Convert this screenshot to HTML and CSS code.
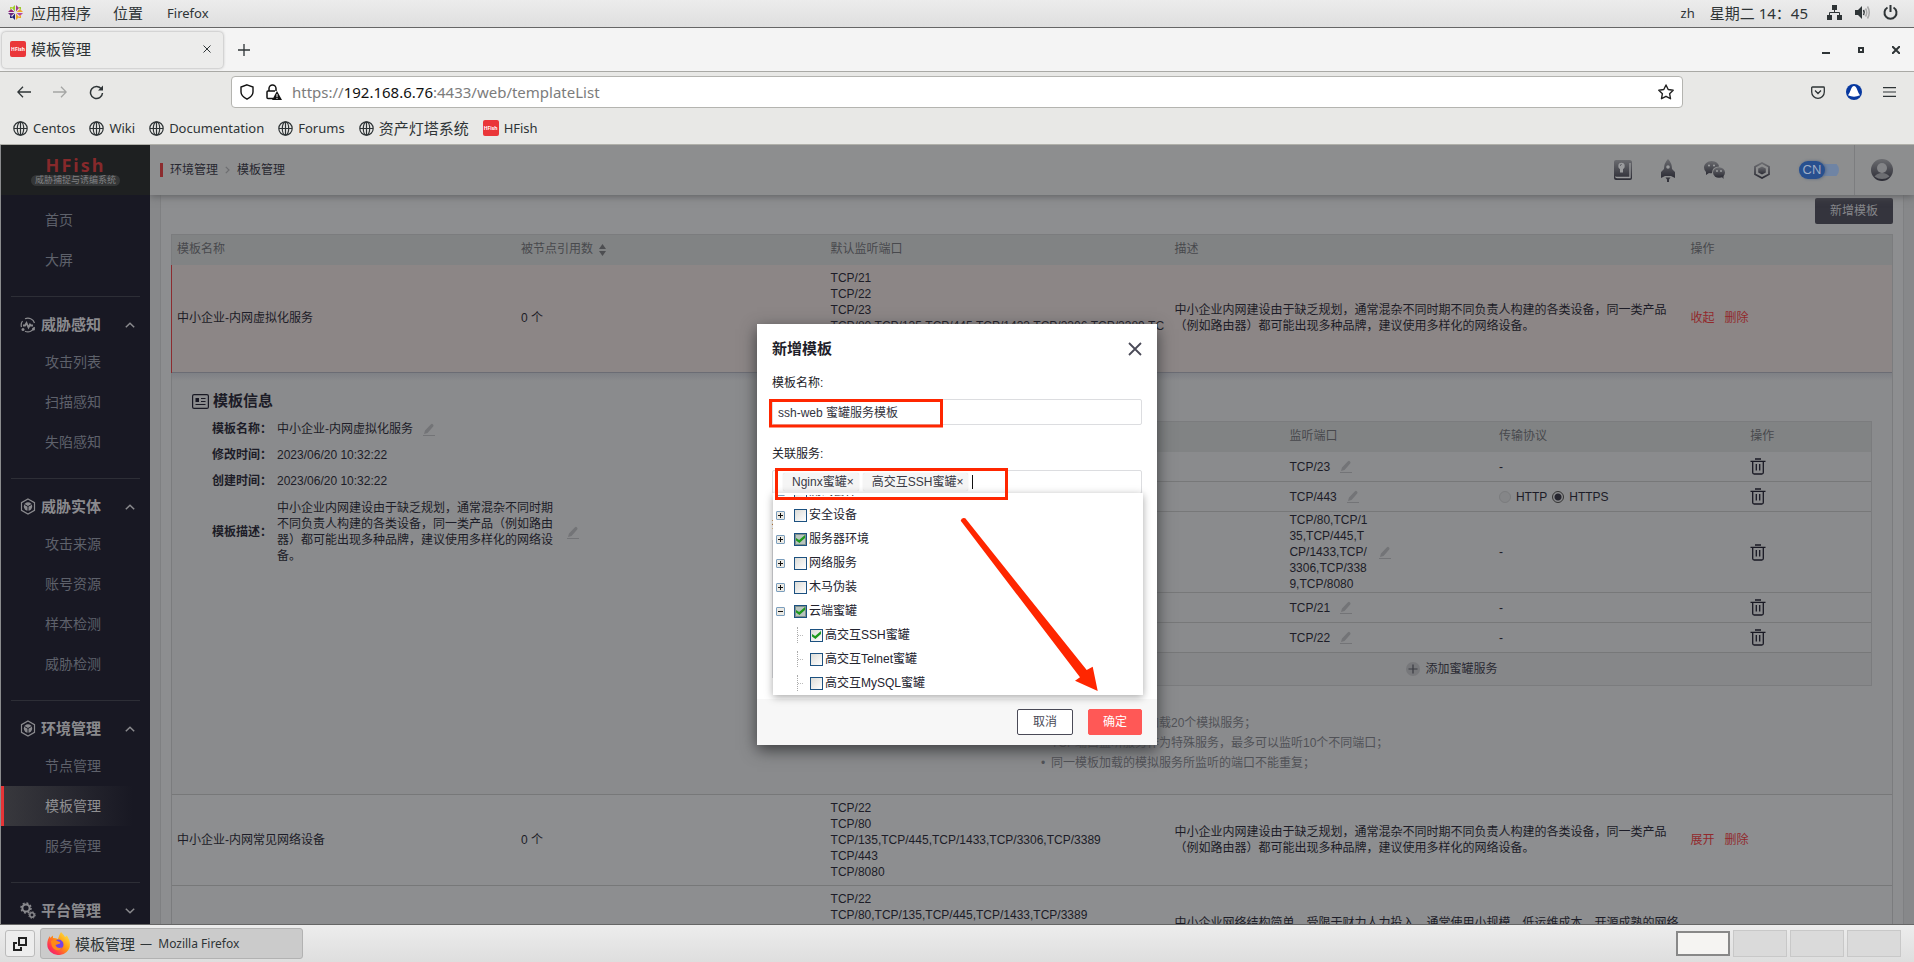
FILE: index.html
```html
<!DOCTYPE html>
<html lang="zh-CN">
<head>
<meta charset="utf-8">
<title>模板管理</title>
<link rel="stylesheet" href="styles.css">
</head>
<body>
<svg class="defs" aria-hidden="true">
  <defs>
    <linearGradient id="fade" x1="0" y1="0" x2="0" y2="1"><stop offset="0" stop-color="#6b6c70"/><stop offset="1" stop-color="#2b2b34"/></linearGradient>
    <symbol id="globe" viewBox="0 0 15 15"><g fill="none" stroke="#2e3436" stroke-width="1.2"><circle cx="7.5" cy="7.5" r="6.7"/><ellipse cx="7.5" cy="7.5" rx="3.2" ry="6.7"/><path d="M1 7.5H14M7.5 1V14"/></g></symbol>
    <symbol id="pen" viewBox="0 0 12 13"><path d="M1 11 2 7.500 8 1.200Q9 .4 10 1.400 11 2.200 10.200 3.400L4.500 10Z" fill="#737477"/><path d="M0 12.500H12" stroke="#737477"/></symbol>
    <symbol id="trash" viewBox="0 0 16 17"><g fill="none" stroke="#181823" stroke-width="1.300"><path d="M5 1H11M.5 3.300H15.500M2.700 3.500V14.500Q2.700 16 4.200 16H11.800Q13.300 16 13.300 14.500V3.500M6.300 6V12.500M9.700 6V12.500"/></g></symbol>
    <symbol id="up" viewBox="0 0 10 6"><path d="M.8 5.200 5 1.200 9.200 5.200" fill="none" stroke="#8a8a8e" stroke-width="1.500"/></symbol>
    <symbol id="hex" viewBox="0 0 16 17"><g fill="none" stroke="#8a8a8e" stroke-width="1.200"><path d="M8 1 14.500 4.700V12.300L8 16 1.500 12.300V4.700Z"/></g><circle cx="8" cy="8.500" r="4.200" fill="#8a8a8e"/><path d="M8 8.500V13M8 8.500 4.500 6.500M8 8.500 11.500 6.500" stroke="#181823" stroke-width="1"/></symbol>
  </defs>
</svg>

<header class="topbar">
  <nav class="topbar-menu">
    <svg width="15" height="15" viewBox="0 0 15 15"><path d="M7 0 4 3 7 6.500Z" fill="#9ccd2a"/><path d="M8 0 11 3 8 6.500Z" fill="#a23a8c"/><path d="M0 7 3 4 6.500 7Z" fill="#932279"/><path d="M0 8 3 11 6.500 8Z" fill="#6b2a80"/><path d="M15 7 12 4 8.500 7Z" fill="#efa724"/><path d="M15 8 12 11 8.500 8Z" fill="#b84aa0"/><path d="M7 15 4 12 7 8.500Z" fill="#262577"/><path d="M8 15 11 12 8 8.500Z" fill="#efa724"/><path d="M2 2H5L2 5Z" fill="#b5d334"/><path d="M13 2H10L13 5Z" fill="#9ccd2a"/><path d="M2 13H5L2 10Z" fill="#262577"/><path d="M13 13H10L13 10Z" fill="#efa724"/></svg>
    <button class="plain cjk">应用程序</button><button class="plain cjk place">位置</button><button class="plain app">Firefox</button>
  </nav>
  <div class="topbar-status">
    <span>zh</span><span class="cjk time">星期二 14：45</span>
    <svg width="15" height="15" viewBox="0 0 15 15"><path d="M5 0H10V5H5ZM0 10H5V15H0ZM10 10H15V15H10Z" fill="#2e3436"/><path d="M7.500 5V7.500M2.500 10V7.500H12.500V10" fill="none" stroke="#2e3436"/></svg>
    <svg width="15" height="15" viewBox="0 0 15 15"><path d="M0 5H3L7 1V14L3 10H0Z" fill="#2e3436"/><path d="M8.500 5Q10 7.500 8.500 10" fill="none" stroke="#2e3436" stroke-width="1.500"/><path d="M10.500 3.500Q13 7.500 10.500 11.500M12.500 1.500Q16 7.500 12.500 13.500" fill="none" stroke="#aaa" stroke-width="1.500"/></svg>
    <svg width="15" height="15" viewBox="0 0 15 15"><path d="M4.500 2.500A6 6 0 1 0 10.500 2.500M7.500 0V7" fill="none" stroke="#2e3436" stroke-width="2"/></svg>
  </div>
</header>

<div class="tabs">
  <div class="tab"><span class="fav">HFish</span><span class="tab-title cjk">模板管理</span>
    <button class="plain tab-close" aria-label="关闭"><svg width="8" height="8" viewBox="0 0 8 8"><path d="M.5.5 7.500 7.500M7.500.5.5 7.500" stroke="#2e3436"/></svg></button></div>
  <button class="plain" aria-label="新标签页"><svg width="12" height="12" viewBox="0 0 12 12"><path d="M6 0V12M0 6H12" stroke="#2e3436" stroke-width="1.300"/></svg></button>
  <div class="window-buttons">
    <button class="plain" aria-label="最小化"><svg width="8" height="8" viewBox="0 0 8 8"><path d="M0 7H8" stroke="#2e3436" stroke-width="2"/></svg></button>
    <button class="plain" aria-label="最大化"><svg width="6" height="6" viewBox="0 0 6 6"><path d="M1 1H5V5H1Z" fill="none" stroke="#2e3436" stroke-width="2"/></svg></button>
    <button class="plain" aria-label="关闭窗口"><svg width="8" height="8" viewBox="0 0 8 8"><path d="M0 0 8 8M8 0 0 8" stroke="#2e3436" stroke-width="2"/></svg></button>
  </div>
</div>

<div class="navbar">
  <div class="nav-buttons">
    <button class="plain" aria-label="后退"><svg width="14" height="12" viewBox="0 0 14 12"><path d="M14 6H1M6 .8.8 6 6 11.200" fill="none" stroke="#2e3436" stroke-width="1.300"/></svg></button>
    <button class="plain" aria-label="前进"><svg width="14" height="12" viewBox="0 0 14 12"><path d="M0 6H13M8 .8 13.200 6 8 11.200" fill="none" stroke="#a4a5a4" stroke-width="1.300"/></svg></button>
    <button class="plain" aria-label="刷新"><svg width="15" height="15" viewBox="0 0 15 15"><path d="M12.500 4.200A6 6 0 1 0 13.500 8" fill="none" stroke="#2e3436" stroke-width="1.500"/><path d="M14 .5V5.500H9Z" fill="#2e3436"/></svg></button>
  </div>
  <div class="urlbar">
    <svg width="14" height="16" viewBox="0 0 14 16"><path d="M7 .8 13 3V8Q13 12 7 15.200 1 12 1 8V3Z" fill="none" stroke="#111" stroke-width="1.400"/></svg>
    <svg width="16" height="16" viewBox="0 0 16 16"><path d="M3 7V4.500A3.500 3.500 0 0 1 10 4.500V7M7 14.500H2Q1 14.500 1 13.500V8Q1 7 2 7H9" fill="none" stroke="#111" stroke-width="1.500"/><path d="M11 7 16 16H6Z" fill="#111"/><path d="M11 10V13M11 13.800V15" stroke="#fff"/></svg>
    <span class="url">https://<b>192.168.6.76</b>:4433/web/templateList</span>
    <svg class="star" width="16" height="16" viewBox="0 0 16 16"><path d="M8 1 10.200 5.500 15.200 6.200 11.600 9.700 12.500 14.700 8 12.300 3.500 14.700 4.400 9.700.8 6.200 5.800 5.500Z" fill="none" stroke="#222" stroke-width="1.400" stroke-linejoin="round"/></svg>
  </div>
  <div class="nav-tools">
    <svg width="14" height="13" viewBox="0 0 14 13"><path d="M1.500 1H12.500Q13.300 1 13.300 1.800V6A6.300 6.300 0 0 1 .7 6V1.800Q.7 1 1.500 1ZM4 4.500 7 7.500 10 4.500" fill="none" stroke="#2e3436" stroke-width="1.300"/></svg>
    <svg width="16" height="16" viewBox="0 0 16 16"><circle cx="8" cy="8" r="8" fill="#0839a0"/><path d="M8 2Q10 2 11.300 6 12.300 9 14 11.300 11 12.700 8 12.700T2 11.300Q3.700 9 4.700 6 6 2 8 2Z" fill="#fff"/></svg>
    <svg width="13" height="10" viewBox="0 0 13 10"><path d="M0 .7H13M0 5H13M0 9.300H13" stroke="#2e3436" stroke-width="1.200"/></svg>
  </div>
</div>

<nav class="bookmarks">
  <a href="#"><svg width="15" height="15"><use href="#globe"/></svg>Centos</a>
  <a href="#"><svg width="15" height="15"><use href="#globe"/></svg>Wiki</a>
  <a href="#"><svg width="15" height="15"><use href="#globe"/></svg>Documentation</a>
  <a href="#"><svg width="15" height="15"><use href="#globe"/></svg>Forums</a>
  <a href="#" class="cjk"><svg width="15" height="15"><use href="#globe"/></svg>资产灯塔系统</a>
  <a href="#"><span class="fav">HFish</span>HFish</a>
</nav>

<div class="page">
  <aside class="sidebar">
    <div class="logo"><strong>HFish</strong><span>威胁捕捉与诱编系统</span></div>
    <nav class="menu">
      <a href="#">首页</a><a href="#">大屏</a>
      <section><h2><svg width="16" height="16" viewBox="0 0 16 16"><path d="M5 1.800A6.800 6.800 0 0 1 14.500 6M14.500 10A6.800 6.800 0 0 1 5 14.200M2.500 4A6.800 6.800 0 0 0 1.500 10" fill="none" stroke="#8a8a8e" stroke-width="1.200"/><path d="M3 8.500H5L6.500 6 8.500 10.500 10 7.500 11 8.500H13" fill="none" stroke="#8a8a8e" stroke-width="1.800"/><circle cx="3" cy="12.500" r="1.500" fill="#8a8a8e"/><circle cx="13.500" cy="12" r="1.500" fill="#8a8a8e"/></svg>威胁感知<svg class="arrow" width="10" height="6"><use href="#up"/></svg></h2>
        <a href="#">攻击列表</a><a href="#">扫描感知</a><a href="#">失陷感知</a></section>
      <section><h2><svg width="16" height="17"><use href="#hex"/></svg>威胁实体<svg class="arrow" width="10" height="6"><use href="#up"/></svg></h2>
        <a href="#">攻击来源</a><a href="#">账号资源</a><a href="#">样本检测</a><a href="#">威胁检测</a></section>
      <section><h2><svg width="16" height="17"><use href="#hex"/></svg>环境管理<svg class="arrow" width="10" height="6"><use href="#up"/></svg></h2>
        <a href="#">节点管理</a><a href="#" class="current">模板管理</a><a href="#">服务管理</a></section>
      <section><h2><svg width="16" height="17" viewBox="0 0 16 17"><circle cx="6" cy="6" r="3.600" fill="none" stroke="#8a8a8e" stroke-width="2"/><circle cx="6" cy="6" r="5" fill="none" stroke="#8a8a8e" stroke-width="1.500" stroke-dasharray="2 1.900"/><circle cx="12" cy="13" r="2.200" fill="none" stroke="#8a8a8e" stroke-width="1.500"/><circle cx="12" cy="13" r="3.300" fill="none" stroke="#8a8a8e" stroke-dasharray="1.400 1.200"/></svg>平台管理<svg class="arrow down" width="10" height="6"><use href="#up"/></svg></h2></section>
    </nav>
  </aside>

  <main class="main">
    <header class="header">
      <div class="crumbs"><i></i><a href="#">环境管理</a><svg width="5" height="8" viewBox="0 0 5 8"><path d="M.8.8 4 4 .8 7.200" fill="none" stroke="#6d6e70" stroke-width="1.200"/></svg><a href="#">模板管理</a></div>
      <div class="tools">
        <svg width="18" height="20" viewBox="0 0 18 20"><path d="M2 0H16Q18 .5 18 2V18Q18 20 16 20H2Q0 20 0 18V2Q0 0 2 0Z" fill="url(#fade)"/><path d="M16 3V17.500H3Q1.500 17.500 2 16.500" fill="none" stroke="#9a9b9d" stroke-width="1.300"/><circle cx="7.500" cy="6" r="3.200" fill="#9a9b9d"/><path d="M6 8H9V12.500H6Z" fill="#9a9b9d"/><path d="M6 5.500 7.500 4.500" stroke="#4b4b52"/></svg>
        <svg width="14" height="23" viewBox="0 0 14 23"><path d="M7 0Q11 4 11 10L14 13V19L10 17H4L0 19V13L3 10Q3 4 7 0Z" fill="url(#fade)"/><circle cx="7" cy="8" r="1.800" fill="#9a9b9d"/><path d="M4.500 18.500H9.500L8 20.500V23H6V20.500Z" fill="#33333b"/></svg>
        <svg width="21" height="18" viewBox="0 0 21 18"><path d="M7.500 0C12 0 15 3 15 5.500Q8 5.500 8 12 7 12.500 5 12L2 14V11Q0 9 0 6.500C0 3 3.500 0 7.500 0Z" fill="url(#fade)"/><ellipse cx="15" cy="11.500" rx="6" ry="5.200" fill="url(#fade)"/><path d="M17 15 19.500 18V14Z" fill="#33333b"/><g fill="#a0a1a3"><circle cx="5" cy="4.500" r="1"/><circle cx="10" cy="4.500" r="1"/><circle cx="13" cy="10" r=".9"/><circle cx="17" cy="10" r=".9"/></g></svg>
        <svg width="16" height="17" viewBox="0 0 16 17"><path d="M8 1 15 4.800V12.200L8 16 1 12.200V4.800Z" fill="none" stroke="url(#fade)" stroke-width="1.800"/><path d="M8 4.500 11.800 6.500V10.500L8 12.500 4.200 10.500V6.500Z" fill="url(#fade)"/></svg>
        <button class="lang" role="switch" aria-checked="true"><span>CN</span></button>
      </div>
      <button class="avatar" aria-label="用户"><svg width="22" height="22" viewBox="0 0 22 22"><circle cx="11" cy="11" r="11" fill="url(#fade)"/><circle cx="11" cy="9" r="5" fill="#838487"/><path d="M3.500 17.500Q6 14 11 14T18.500 17.500Q15 20 11 20T3.500 17.500Z" fill="#6d6e72"/></svg></button>
    </header>

    <div class="content"><div class="card">
      <div class="card-top"><button class="add">新增模板</button></div>
      <table class="list">
        <colgroup><col class="w20"><col class="w18"><col class="w20"><col class="w30"><col class="w12"></colgroup>
        <thead><tr><th>模板名称</th><th>被节点引用数<svg class="sort" width="7" height="12" viewBox="0 0 7 12"><path d="M3.500 0 7 5H0ZM3.500 12 0 7H7Z" fill="#4d4e51"/></svg></th><th>默认监听端口</th><th>描述</th><th>操作</th></tr></thead>
        <tbody>
          <tr class="open"><td>中小企业-内网虚拟化服务</td><td>0 个</td><td class="ports">TCP/21<br>TCP/22<br>TCP/23<br>TCP/80,TCP/135,TCP/445,TCP/1433,TCP/3306,TCP/3389,TCP/8080<br>TCP/443</td><td>中小企业内网建设由于缺乏规划，通常混杂不同时期不同负责人构建的各类设备，同一类产品（例如路由器）都可能出现多种品牌，建议使用多样化的网络设备。</td><td class="ops"><a href="#">收起</a><a href="#">删除</a></td></tr>
          <tr class="detail"><td colspan="5"><div class="detail-grid">
            <div class="info">
              <h3><svg width="17" height="15" viewBox="0 0 17 15"><rect x=".6" y=".6" width="15.800" height="13.800" rx="1.500" fill="none" stroke="#181823" stroke-width="1.200"/><path d="M3.500 4H7V8H3.500Z" fill="#181823"/><path d="M9 4.500H13.500M9 7.500H13.500M3.500 10.500H13.500" stroke="#181823"/></svg>模板信息</h3>
              <dl>
                <dt>模板名称：</dt><dd>中小企业-内网虚拟化服务<svg width="12" height="13"><use href="#pen"/></svg></dd>
                <dt>修改时间：</dt><dd>2023/06/20 10:32:22</dd>
                <dt>创建时间：</dt><dd>2023/06/20 10:32:22</dd>
                <dt class="tall">模板描述：</dt><dd class="tall"><span>中小企业内网建设由于缺乏规划，通常混杂不同时期不同负责人构建的各类设备，同一类产品（例如路由器）都可能出现多种品牌，建议使用多样化的网络设备。</span><svg width="12" height="13"><use href="#pen"/></svg></dd>
              </dl>
            </div>
            <div class="services">
              <table class="sub">
                <colgroup><col class="w30"><col class="w25"><col class="w30"><col class="w15"></colgroup>
                <thead><tr><th></th><th>监听端口</th><th>传输协议</th><th>操作</th></tr></thead>
                <tbody>
                  <tr><td></td><td><div class="port"><span>TCP/23</span><svg width="12" height="13"><use href="#pen"/></svg></div></td><td>-</td><td><button class="plain" aria-label="删除"><svg width="16" height="17"><use href="#trash"/></svg></button></td></tr>
                  <tr><td></td><td><div class="port"><span>TCP/443</span><svg width="12" height="13"><use href="#pen"/></svg></div></td><td><div class="radios"><label><input type="radio" name="protocol">HTTP</label><label><input type="radio" name="protocol" checked>HTTPS</label></div></td><td><button class="plain" aria-label="删除"><svg width="16" height="17"><use href="#trash"/></svg></button></td></tr>
                  <tr><td></td><td><div class="port"><span>TCP/80,TCP/135,TCP/445,TCP/1433,TCP/3306,TCP/3389,TCP/8080</span><svg width="12" height="13"><use href="#pen"/></svg></div></td><td>-</td><td><button class="plain" aria-label="删除"><svg width="16" height="17"><use href="#trash"/></svg></button></td></tr>
                  <tr><td></td><td><div class="port"><span>TCP/21</span><svg width="12" height="13"><use href="#pen"/></svg></div></td><td>-</td><td><button class="plain" aria-label="删除"><svg width="16" height="17"><use href="#trash"/></svg></button></td></tr>
                  <tr><td></td><td><div class="port"><span>TCP/22</span><svg width="12" height="13"><use href="#pen"/></svg></div></td><td>-</td><td><button class="plain" aria-label="删除"><svg width="16" height="17"><use href="#trash"/></svg></button></td></tr>
                </tbody>
              </table>
              <button class="add-service"><svg width="14" height="14" viewBox="0 0 14 14"><circle cx="7" cy="7" r="7" fill="#77787b"/><path d="M7 2.500V11.500M2.500 7H11.500" stroke="#3a3b42" stroke-width="1.200"/></svg>添加蜜罐服务</button>
              <ul class="hints"><li>单个模板最多可以加载20个模拟服务；</li><li>TCP端口监听服务作为特殊服务，最多可以监听10个不同端口；</li><li>同一模板加载的模拟服务所监听的端口不能重复；</li></ul>
            </div>
          </div></td></tr>
          <tr><td>中小企业-内网常见网络设备</td><td>0 个</td><td class="ports">TCP/22<br>TCP/80<br>TCP/135,TCP/445,TCP/1433,TCP/3306,TCP/3389<br>TCP/443<br>TCP/8080</td><td>中小企业内网建设由于缺乏规划，通常混杂不同时期不同负责人构建的各类设备，同一类产品（例如路由器）都可能出现多种品牌，建议使用多样化的网络设备。</td><td class="ops"><a href="#">展开</a><a href="#">删除</a></td></tr>
          <tr class="next"><td></td><td></td><td class="ports top">TCP/22<br>TCP/80,TCP/135,TCP/445,TCP/1433,TCP/3389</td><td><p class="two-lines">中小企业网络结构简单，受限于财力人力投入，通常使用小规模、低运维成本、开源成熟的网络</p></td><td></td></tr>
        </tbody>
      </table>
    </div></div>
  </main>

  <div class="overlay">
    <form class="dialog" role="dialog" aria-label="新增模板">
      <div class="dialog-body">
        <div class="dialog-head"><h2>新增模板</h2><button type="button" class="plain" aria-label="关闭"><svg width="14" height="14" viewBox="0 0 14 14"><path d="M1 1 13 13M13 1 1 13" stroke="#4a4a57" stroke-width="1.800"/></svg></button></div>
        <label class="field-label" for="name">模板名称:</label>
        <input class="text-input" id="name" type="text" value="ssh-web 蜜罐服务模板">
        <label class="field-label second" for="service">关联服务:</label>
        <div class="select">
          <span class="tag">Nginx蜜罐<button type="button" class="plain" aria-label="移除">×</button></span><span class="tag">高交互SSH蜜罐<button type="button" class="plain" aria-label="移除">×</button></span><i class="caret"></i><input id="service" type="text">
          <ul class="tree">
            <li><i class="exp"></i><label><input type="checkbox">测试套件</label></li>
            <li><i class="exp"></i><label><input type="checkbox">安全设备</label></li>
            <li><i class="exp"></i><label><input type="checkbox" class="part" checked>服务器环境</label></li>
            <li><i class="exp"></i><label><input type="checkbox">网络服务</label></li>
            <li><i class="exp"></i><label><input type="checkbox">木马伪装</label></li>
            <li><i class="exp minus"></i><label><input type="checkbox" class="part" checked>云端蜜罐</label></li>
            <li class="child"><i class="line"></i><label><input type="checkbox" checked>高交互SSH蜜罐</label></li>
            <li class="child"><i class="line"></i><label><input type="checkbox">高交互Telnet蜜罐</label></li>
            <li class="child"><i class="line"></i><label><input type="checkbox">高交互MySQL蜜罐</label></li>
          </ul>
        </div>
        <label class="field-label desc" for="desc">描述:</label>
        <textarea id="desc"></textarea>
      </div>
      <div class="dialog-foot"><button type="button" class="btn">取消</button><button type="button" class="btn primary">确定</button></div>
      <svg class="marks" viewBox="0 0 400 421"><g fill="none" stroke="#ff2600" stroke-width="3"><path d="M13.500 76.500H184.500V102H13.500Z"/><path d="M19.500 145.500H249.500V174.500H19.500Z"/></g><path d="M203.700 196.700Q204.500 193 208.300 194.300L329.700 346 335.700 342.700 340.700 367 318 356.700 323 353.300Z" fill="#ff2600"/></svg>
    </form>
  </div>
</div>

<footer class="taskbar">
  <button class="desktop" aria-label="显示桌面"><svg width="14" height="14" viewBox="0 0 14 14"><path d="M6 1H13V8H6ZM4 6H1V13H8V10" fill="none" stroke="#222" stroke-width="2"/></svg></button>
  <button class="task"><svg width="23" height="23" viewBox="0 0 23 23"><defs><linearGradient id="ff" x1="1" y1="0" x2="0" y2="1"><stop offset="0" stop-color="#fff44f"/><stop offset=".45" stop-color="#ff980e"/><stop offset=".75" stop-color="#ff3750"/><stop offset="1" stop-color="#e31587"/></linearGradient></defs><path d="M14 0Q17 3 18 5 20 4 19.500 3 23 8 23 12.500A11.300 10.500 0 0 1 .3 12.500Q.3 7 3 4V6L6 3.500 6 6Q9 6 11 7 12 3 14 0Z" fill="url(#ff)"/><circle cx="11.500" cy="12.500" r="5" fill="#7542e5"/><path d="M4 9Q8 7 11 9.500 14 10 13 11.500L8.500 13Q10 17 15 15.500 12 20 7 17 4 14 4 9Z" fill="#ff8a16"/></svg><span class="cjk">模板管理</span><span class="task-app">— &nbsp;Mozilla Firefox</span></button>
  <div class="pager"><i class="on"></i><i></i><i></i><i></i></div>
</footer>
</body>
</html>
```
FILE: styles.css
```css
* { box-sizing: border-box; }
body { margin: 0; height: 100vh; display: flex; flex-direction: column; overflow: hidden; background: #e8e8e6; color: #2e3436; font: 13px/16px "Noto Sans", "Noto Sans CJK SC", sans-serif; }
a { color: inherit; text-decoration: none; }
button, input, textarea { font: inherit; color: inherit; }
svg { flex: none; display: block; }
ul, dl, dd, h2, h3, p { margin: 0; padding: 0; }
ul { list-style: none; }
.defs { position: absolute; width: 0; height: 0; }
.plain { border: 0; padding: 0; background: none; display: flex; align-items: center; }
.cjk { font-size: 15px; }

/* desktop top bar */
.topbar { flex: none; height: 28px; padding: 0 16px 2px 8px; display: flex; justify-content: space-between; align-items: center; background: linear-gradient(#ececec, #dfdfdf); border-bottom: 1px solid #666; }
.topbar-menu, .topbar-status { display: flex; align-items: center; gap: 8px; }
.topbar-status { gap: 15px; }
.place { margin: 0 16px 0 14px; }
.time { margin-right: 4px; }
.topbar-status svg + svg { margin-left: -2px; }

/* browser tabs */
.tabs { flex: none; height: 44px; padding: 0 14px 0 2px; display: flex; align-items: center; gap: 15px; background: #f4f4f4; border-bottom: 1px solid #a9a9a5; }
.tab { width: 221px; height: 36px; padding: 0 12px 2px 8px; display: flex; align-items: center; gap: 5px; background: #ececeb; border-radius: 4px; box-shadow: 0 0 3px #999; }
.tab-close { margin-left: auto; }
.fav { width: 16px; height: 16px; border-radius: 2px; background: #ea3639; color: #fff; font-size: 5px; font-weight: bold; line-height: 16px; text-align: center; }
.window-buttons { margin-left: auto; display: flex; align-items: center; gap: 28px; }

/* browser toolbar */
.navbar { flex: none; height: 40px; display: flex; align-items: center; padding: 0 18px 0 17px; }
.nav-buttons { width: 214px; display: flex; align-items: center; gap: 22px; }
.urlbar { flex: 1; height: 32px; padding: 0 8px; display: flex; align-items: center; gap: 12px; background: #fff; border: 1px solid #b4b4b0; border-radius: 4px; color: #7c7c7c; }
.url { font-size: 15px; margin-left: -2px; }
.url b { font-weight: normal; color: #111; }
.star { margin-left: auto; }
.nav-tools { width: 213px; display: flex; justify-content: flex-end; align-items: center; gap: 21px; }
.bookmarks { flex: none; height: 33px; padding: 0 13px; display: flex; align-items: center; gap: 14px; border-bottom: 1px solid #b0b0aa; }
.bookmarks a { display: flex; align-items: center; gap: 5px; }

/* page */
.page { flex: 1; min-height: 0; position: relative; display: flex; border-left: 1px solid #8a8b8d; background: #87888a; color: #1c1c27; font: 12px/16px "Liberation Sans", "Noto Sans CJK SC", sans-serif; overflow: hidden; }
.sidebar { flex: none; width: 149px; background: #181823; position: relative; z-index: 1; }
.logo { height: 50px; padding-top: 10px; display: flex; flex-direction: column; align-items: center; background: #1e2021; }
.logo strong { font: bold 18px/20px "Noto Sans", sans-serif; color: #86292b; letter-spacing: 2px; }
.logo span { padding: 0 4px; border-radius: 6px; background: #343637; color: #808183; font-size: 9px; line-height: 11px; white-space: nowrap; }
.menu { padding-top: 5px; }
.menu a { display: block; padding-left: 44px; line-height: 40px; font-size: 14px; color: #5e616b; }
.menu section { margin: 16px 0 0; }
.menu section::before { content: ""; display: block; margin: 0 10px 10px; border-top: 1px solid #2d2e36; }
.menu h2 { height: 35px; padding: 0 15px 0 19px; display: flex; align-items: center; gap: 5px; font-size: 15px; color: #8a8a8e; }
.menu .arrow { margin-left: auto; }
.menu .down { transform: rotate(180deg); }
.menu .current { color: #8f8f92; margin-left: -1px; padding-left: 41px; border-left: 4px solid #e63437; background: linear-gradient(90deg, #38383d, #181823 88%); }

.main { flex: 1; min-width: 0; display: flex; flex-direction: column; }
.header { flex: none; height: 50px; display: flex; align-items: stretch; background: #8d8e8f; box-shadow: 0 1px 8px #5a5b5d; position: relative; }
.crumbs { flex: 1; padding-left: 10px; display: flex; align-items: center; gap: 7px; color: #27272f; }
.crumbs i { width: 3px; height: 14px; background: #8c2c2f; }
.tools { display: flex; align-items: center; gap: 29px; padding-right: 15px; }
.lang { width: 40px; height: 18px; padding: 0; border: 0; display: flex; align-items: center; background: linear-gradient(#6f84a4, #6f84a4) center / 100% 12px no-repeat; border-radius: 9px; }
.lang span { width: 26px; line-height: 18px; border-radius: 9px; background: #28508f; color: #9fadc4; font-size: 13px; text-align: center; box-shadow: 1px 0 3px #56657f; }
.avatar { width: 60px; border: 0; border-left: 1px solid #7c7d7f; background: none; padding: 0 0 0 16px; }
.content { flex: 1; min-height: 0; padding: 0 10px; overflow: hidden; }
.card { padding: 3px 10px; border: 1px solid #7f8082; border-width: 0 1px; background: #8d8e90; }
.card-top { display: flex; justify-content: flex-end; margin-bottom: 10px; }
.add { width: 78px; height: 26px; padding: 0; border: 0; border-radius: 2px; background: #34343d; color: #85868a; }

table { width: 100%; table-layout: fixed; border-spacing: 0; }
.w12 { width: 12%; } .w15 { width: 15%; } .w18 { width: 18%; } .w20 { width: 20%; } .w25 { width: 25%; } .w30 { width: 30%; }
th { height: 30px; padding: 0 5px 2px; background: #818384; color: #48494d; font-weight: normal; text-align: left; }
.list { border: 1px solid #7b7c7e; border-bottom: 0; }
td { padding: 5px; border-bottom: 1px solid #777879; }
.sort { display: inline-block; margin-left: 6px; vertical-align: -3px; }
.open td { padding-bottom: 6px; background: #8c8686; border-color: #6b6c74; }
.open td:first-child { box-shadow: -1px 0 0 #8c2c2f; }
.ports { word-break: break-all; }
.ops a { color: #92292c; margin-right: 10px; }
.detail > td { padding: 0; background: linear-gradient(#7e8085, #8a8b8d 8px); }
.detail-grid { display: grid; grid-template-columns: 1fr 1fr; padding: 20px 20px 21px; }
.info h3 { display: flex; align-items: center; gap: 4px; font-size: 15px; line-height: 16px; margin-bottom: 7px; }
.info dl { padding-left: 20px; display: grid; grid-template-columns: 65px auto; }
.info dt, .info dd { min-height: 26px; display: flex; align-items: center; gap: 10px; }
.info dt { font-weight: bold; }
.info .tall { margin-top: 6px; }
.tall span { width: 280px; }
.services { padding-top: 28px; }
.sub { border: 1px solid #7b7c7e; border-bottom: 0; }
.sub td { height: 30px; padding: 0 5px; }
.port { display: flex; align-items: center; gap: 10px; }
.port span { max-width: 80px; word-break: break-all; }
.radios, .radios label { display: flex; align-items: center; gap: 5px; }
.radios input { appearance: none; width: 12px; height: 12px; margin: 0; border: 1px solid #7b7c7e; border-radius: 50%; background: #858688; }
.radios input:checked { border-color: #333; background: radial-gradient(#26262f 0 3px, #8a8b8d 4px); }
.add-service { width: 100%; height: 33px; display: flex; align-items: center; justify-content: center; gap: 5px; border: 1px solid #7b7c7e; border-top: 0; background: #868789; color: #2a2a33; }
.hints { padding: 27px 0 0 9px; line-height: 20px; color: #515257; }
.hints li::before { content: "•"; display: inline-block; width: 10px; }
.next td { height: 91px; }
.top { vertical-align: top; }
.two-lines { min-height: 32px; white-space: nowrap; }

/* dialog */
.overlay { position: absolute; z-index: 2; inset: 0 0 0 -1px; display: flex; align-items: center; justify-content: center; }
.dialog { position: relative; width: 400px; background: #fff; box-shadow: 0 5px 15px #3c3d3f; }
.dialog-body { padding: 16px 15px 21px; display: flex; flex-direction: column; }
.dialog-head { display: flex; justify-content: space-between; align-items: center; height: 18px; margin-bottom: 17px; }
.dialog-head h2 { font-size: 15px; line-height: 18px; color: #1f1f2b; }
.field-label { line-height: 16px; margin-bottom: 8px; }
.second { margin-top: 21px; }
.text-input { height: 26px; padding: 0 5px 2px; border: 1px solid #dcdde0; border-radius: 2px; color: #33333d; }
.select { position: relative; height: 24px; padding: 0 10px; display: flex; align-items: center; gap: 4px; border: 1px solid #dcdde0; border-radius: 2px; }
.select > input { flex: 1; min-width: 0; border: 0; padding: 0; outline: 0; }
.tag { display: flex; align-items: center; height: 18px; padding: 0 5px 0 9px; background: #f5f5f5; border-radius: 2px; box-shadow: 0 0 1px #ccc; color: #3a3a45; white-space: nowrap; }
.caret { width: 1px; height: 14px; background: #111; }
.tree { position: absolute; left: 0; right: -2px; top: 100%; height: 202px; border-top: 2px solid #fff; padding-left: 3px; display: flex; flex-direction: column; justify-content: flex-end; overflow: hidden; background: #fff; box-shadow: 0 2px 8px rgba(0, 0, 0, .35); color: #23232e; }
.tree li { flex: none; height: 24px; display: flex; align-items: center; gap: 9px; }
.tree label { display: flex; align-items: center; gap: 2px; }
.tree .child { padding-left: 21px; gap: 6px; }
.tree input { appearance: none; width: 13px; height: 13px; margin: 0; border: 1px solid #1c5180; background: linear-gradient(135deg, #dcdcd7, #fff); }
.tree input.part { background: #b9c4bf; box-shadow: inset 0 0 0 1px #7e918d; }
.tree input:checked::before { content: ""; display: block; width: 9px; height: 9px; margin: 1px; background: #1d9a1d; clip-path: polygon(0 38%, 35% 62%, 100% 5%, 100% 38%, 38% 95%, 0 68%); }
.exp { width: 9px; height: 9px; border: 1px solid #7b9ebd; border-radius: 1px; background: linear-gradient(#111, #111) center / 5px 1px no-repeat, linear-gradient(#111, #111) center / 1px 5px no-repeat, #eceae4; }
.minus { background: linear-gradient(#111, #111) center / 5px 1px no-repeat, #eceae4; }
.line { width: 7px; height: 16px; border-left: 1px dotted #aaa; background: repeating-linear-gradient(90deg, #bbb 0 1px, transparent 1px 2px) left center / 7px 1px no-repeat; }
.desc { margin: 22px 0 8px; }
textarea { height: 138px; border: 1px solid #dcdde0; resize: none; }
.dialog-foot { height: 46px; padding: 0 15px; display: flex; align-items: center; justify-content: flex-end; gap: 15px; background: #f7f7f7; }
.btn { width: 56px; height: 26px; padding: 0; border: 1px solid #4a4a57; border-radius: 2px; background: #fff; color: #4a4a57; }
.primary { width: 54px; border-color: #ff5856; background: #ff5856; color: #fff; }
.marks { position: absolute; inset: 0; width: 100%; height: 100%; pointer-events: none; }

/* desktop task bar */
.taskbar { flex: none; height: 38px; padding: 0 13px 0 5px; display: flex; align-items: center; gap: 5px; border-top: 1px solid #666; background: linear-gradient(#ededed, #dedede); }
.desktop { width: 30px; height: 27px; padding: 0; display: flex; align-items: center; justify-content: center; border: 1px solid #bbb; border-radius: 3px; background: #ededed; }
.task { width: 263px; height: 31px; padding: 0 6px; display: flex; align-items: center; gap: 5px; border: 1px solid #b2b2b2; border-radius: 3px; background: #cbcbcb; white-space: nowrap; }
.task-app { font-size: 12px; }
.pager { margin-left: auto; display: flex; gap: 3px; }
.pager i { width: 54px; height: 27px; border: 1px solid #c8c8c8; background: #dadada; }
.pager .on { border: 2px solid #888; background: #f5f4f2; height: 25px; margin-top: 1px; }
```
